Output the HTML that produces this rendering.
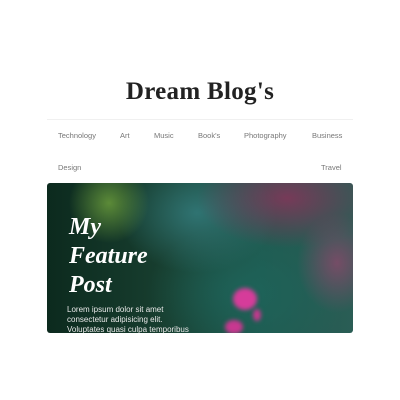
<!DOCTYPE html>
<html><head><style>
html,body{margin:0;padding:0;background:#fff;width:400px;height:400px;overflow:hidden;font-family:"Liberation Sans",sans-serif}
.t{position:absolute;left:0;width:400px;top:78px;text-align:center;font-family:"Liberation Serif",serif;font-weight:bold;font-size:25px;color:#222;letter-spacing:.3px}
.line{position:absolute;left:47px;width:306px;top:119px;height:1px;background:#f0f0f0}
.n{position:absolute;font-size:7.5px;color:#777}
.hero{position:absolute;left:47px;top:183px;width:306px;height:150px;border-radius:3px;overflow:hidden;
background:
radial-gradient(ellipse 40px 40px at 62px 20px,rgba(110,160,60,.8),transparent),
radial-gradient(ellipse 90px 50px at 240px 15px,rgba(140,50,90,.8),transparent),
radial-gradient(ellipse 40px 50px at 290px 80px,rgba(150,70,110,.7),transparent),
radial-gradient(ellipse 80px 60px at 150px 30px,rgba(50,120,120,.9),transparent),
radial-gradient(ellipse 100px 70px at 200px 110px,rgba(30,100,90,.9),transparent),
linear-gradient(90deg,#0c2a1e,#183f30 40%,#1f5a50 70%,#2a5d55);}
.h{position:absolute;left:22px;top:30px;font-family:"Liberation Serif",serif;font-style:italic;font-weight:bold;font-size:24px;line-height:29px;color:#fff}
.p{position:absolute;left:20px;top:122px;font-size:8px;line-height:10px;color:#e8e8e8;width:122px}
.f{position:absolute;left:186px;top:105px;width:24px;height:22px;border-radius:50%;background:#d63c9a;filter:blur(2px)}
.f2{position:absolute;left:178px;top:137px;width:18px;height:14px;border-radius:50%;background:#c83890;filter:blur(2px)}
.f3{position:absolute;left:206px;top:126px;width:8px;height:12px;border-radius:50%;background:#c83890;filter:blur(2px)}
</style></head><body>
<div class="t">Dream Blog's</div>
<div class="line"></div>
<span class="n" style="left:58px;top:131px">Technology</span>
<span class="n" style="left:120px;top:131px">Art</span>
<span class="n" style="left:154px;top:131px">Music</span>
<span class="n" style="left:198px;top:131px">Book's</span>
<span class="n" style="left:244px;top:131px">Photography</span>
<span class="n" style="left:312px;top:131px">Business</span>
<span class="n" style="left:58px;top:163px">Design</span>
<span class="n" style="left:321px;top:163px">Travel</span>
<div class="hero">
<div class="f"></div><div class="f2"></div><div class="f3"></div>
<div class="h">My<br>Feature<br>Post</div>
<div class="p">Lorem ipsum dolor sit amet consectetur adipisicing elit. Voluptates quasi culpa temporibus</div>
</div>
</body></html>
